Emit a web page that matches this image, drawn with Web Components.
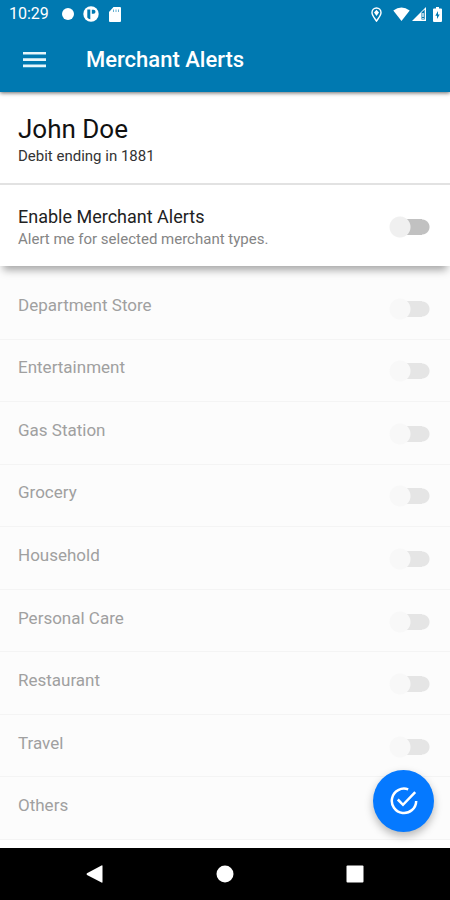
<!DOCTYPE html>
<html lang="en">
<head>
<meta charset="utf-8">
<meta name="viewport" content="width=device-width, initial-scale=1">
<title>Merchant Alerts</title>
<style>
html, body { margin: 0; background: #fff; }
body { font-family: Roboto, "Liberation Sans", sans-serif; color: #222; }
</style>
</head>
<body>
<alerts-screen></alerts-screen>

<template id="status-bar">
<style>
:host { display: flex; align-items: center; justify-content: space-between; height: 28px; padding: 0 8px 0 9px; color: #fff; font-size: 16px; line-height: 20px; }
div { display: flex; align-items: center; }
time { margin-right: 13px; }
svg { display: block; fill: currentColor; }
.dot { margin-right: 9px; }
.app { margin-right: 10px; }
.pin { margin-right: 11px; }
.signal { margin: 0 7px 0 2px; }
</style>
<div>
<time>10:29</time>
<svg class="dot" width="12" height="14" viewBox="0 0 12 14"><circle cx="6" cy="7" r="6"/></svg>
<svg class="app" width="16" height="16" viewBox="0 0 16 16"><circle cx="8" cy="8" r="7.7"/><path d="M4.300 3.500H7.300V13.300A5.500 5.500 0 0 1 4.300 11.500Z" fill="#0079b1"/><path d="M8.800 3.800H10.500A2 2 0 0 1 10.500 7.800H8.800Z" fill="#0079b1"/></svg>
<svg width="12" height="15" viewBox="0 0 12 15"><path d="M4.500 0H11Q12 0 12 1V14Q12 15 11 15H1Q0 15 0 14V5Z"/><path d="M4.500 2.500V5M7 2.500V5M9.500 2.500V5" stroke="#0079b1" stroke-opacity=".6"/></svg>
</div>
<div>
<svg class="pin" width="11" height="15" viewBox="0 0 11 15"><path d="M5.500 14C3.500 11 1 8.500 1 5.500A4.500 4.500 0 0 1 10 5.500C10 8.500 7.500 11 5.500 14Z" fill="none" stroke="currentColor" stroke-width="1.400"/><path d="M5.500 2.800L8 5.500L5.500 9L3 5.500Z"/></svg>
<svg width="17" height="14" viewBox="0 0 17 14"><path d="M8.500 14L.3 3.500Q8.500-2.700 16.700 3.500Z"/></svg>
<svg class="signal" width="14" height="14" viewBox="0 0 14 14"><path d="M0 14L14 0V14Z"/><path d="M9.500 5.500V12.500H12.700V2.500Z" fill="#0079b1"/><path d="M11 6V10M11 11V12" stroke="currentColor" stroke-width="1.300"/></svg>
<svg width="9" height="15" viewBox="0 0 9 15"><path d="M3 0H6V1.500H8Q9 1.500 9 2.500V14Q9 15 8 15H1Q0 15 0 14V2.500Q0 1.500 1 1.500H3Z"/><path d="M5 4L2.300 8.700H4V12L6.700 7.500H5Z" fill="#0079b1"/></svg>
</div>
</template>

<template id="app-bar">
<style>
:host { display: block; position: relative; z-index: 2; background: #0079b1; color: #fff; box-shadow: 0 1px 4px rgba(0,0,0,.6); }
header { display: flex; align-items: center; height: 64px; padding: 0 22px; gap: 39px; box-sizing: border-box; }
button { border: 0; padding: 0; background: none; color: inherit; display: block; }
svg { display: block; }
h1 { margin: 0; font-size: 22px; line-height: 28px; font-weight: 500; }
</style>
<status-bar></status-bar>
<header>
<button type="button" aria-label="Menu"><svg width="25" height="18" viewBox="0 0 25 18" stroke="#e6f6fb" stroke-width="2.600"><path d="M1 2.300H24M1 8.600H24M1 14.900H24"/></svg></button>
<h1><slot></slot></h1>
</header>
</template>

<template id="account-card">
<style>
:host { display: block; padding: 20px 18px 17px; border-bottom: 2px solid #e2e2e2; background: #fff; }
h2 { margin: 0; font-size: 26px; line-height: 34px; font-weight: 400; color: #111; }
p { margin: 0; font-size: 15px; line-height: 20px; color: #333; }
</style>
<h2><slot name="name"></slot></h2>
<p><slot></slot></p>
</template>

<template id="alert-toggle">
<style>
:host { display: block; box-sizing: border-box; border-bottom: 1px solid #f4f4f4; color: #a0a0a0; --track: #e5e5e5; --thumb: #f8f8f8; --size: 17px; }
:host([main]) { position: relative; z-index: 1; height: 81px; border: 0; background: #fff; color: #222; box-shadow: 0 7px 8px -3px rgba(0,0,0,.35); --track: #c1c1c1; --thumb: #f0f0f0; --size: 18px; }
label { display: flex; align-items: center; justify-content: space-between; height: 100%; padding: 0 20px 0 18px; box-sizing: border-box; }
.text { display: block; margin-bottom: 6px; font-size: var(--size); line-height: 22px; }
:host([main]) .text { margin: 4px 0 0; }
::slotted([slot=hint]) { display: block; font-size: 15px; color: #858585; }
input { appearance: none; flex: none; width: 41px; height: 22px; margin: 2px 0 0; background: radial-gradient(circle at 11px 11px, var(--thumb) 10px, transparent 11px), linear-gradient(var(--track), var(--track)) 11px 3px / 22px 16px no-repeat, radial-gradient(circle at 33px 11px, var(--track) 7px, transparent 8px); }
input:checked { transform: scaleX(-1); --track: #8bbcff; --thumb: #007aff; }
</style>
<label><span class="text"><slot></slot><slot name="hint"></slot></span><input type="checkbox" role="switch"></label>
</template>

<template id="save-button">
<style>
:host { display: block; position: absolute; right: 16px; bottom: 68px; z-index: 3; }
button { display: grid; place-items: center; width: 61px; height: 62px; padding: 0; border: 0; border-radius: 50%; background: #0579ff; box-shadow: 0 4px 8px rgba(0,0,0,.28); }
svg { display: block; }
</style>
<button type="button" aria-label="Save"><svg width="28" height="28" viewBox="0 0 28 28" fill="none" stroke="#fff" stroke-width="2.500"><path d="M18.200 2.400A12.200 12.200 0 1 0 26.200 14"/><path d="M7.800 12.500L13 17.800L25.200 5.200"/></svg></button>
</template>

<template id="system-nav">
<style>
:host { display: block; background: #000; }
nav { display: grid; grid-template-columns: repeat(3, 130px); justify-content: center; align-items: center; height: 52px; }
button { display: grid; place-items: center; height: 52px; border: 0; padding: 0; background: none; }
svg { display: block; fill: #fff; }
</style>
<nav aria-label="System">
<button type="button" aria-label="Back"><svg width="18" height="18" viewBox="0 0 18 18"><path d="M16.500 1V17Q16.500 18 15.500 17.500L1 10Q0 9 1 8.200L15.500.5Q16.500 0 16.500 1Z"/></svg></button>
<button type="button" aria-label="Home"><svg width="18" height="18" viewBox="0 0 18 18"><circle cx="9" cy="9" r="8.500"/></svg></button>
<button type="button" aria-label="Recent apps"><svg width="18" height="18" viewBox="0 0 18 18"><rect x=".5" y=".5" width="17" height="17" rx="1"/></svg></button>
</nav>
</template>

<template id="alerts-screen">
<style>
:host { display: flex; flex-direction: column; min-height: 100vh; position: relative; }
main { flex: 1; display: flex; flex-direction: column; }
.list { flex: 1; display: grid; grid-auto-rows: 1fr; padding-top: 11px; background: #fcfcfc; margin-bottom: 8px; }
</style>
<app-bar>Merchant Alerts</app-bar>
<main>
<account-card><span slot="name">John Doe</span>Debit ending in 1881</account-card>
<alert-toggle main>Enable Merchant Alerts<span slot="hint">Alert me for selected merchant types.</span></alert-toggle>
<div class="list">
<alert-toggle disabled>Department Store</alert-toggle>
<alert-toggle disabled>Entertainment</alert-toggle>
<alert-toggle disabled>Gas Station</alert-toggle>
<alert-toggle disabled>Grocery</alert-toggle>
<alert-toggle disabled>Household</alert-toggle>
<alert-toggle disabled>Personal Care</alert-toggle>
<alert-toggle disabled>Restaurant</alert-toggle>
<alert-toggle disabled>Travel</alert-toggle>
<alert-toggle disabled>Others</alert-toggle>
</div>
</main>
<save-button></save-button>
<system-nav></system-nav>
</template>

<script>
class TemplateElement extends HTMLElement {
  constructor() {
    super();
    this.attachShadow({ mode: "open" }).append(
      document.getElementById(this.localName).content.cloneNode(true));
  }
}
class StatusBar extends TemplateElement {}
class AppBar extends TemplateElement {}
class AccountCard extends TemplateElement {}
class SaveButton extends TemplateElement {}
class SystemNav extends TemplateElement {}
class AlertsScreen extends TemplateElement {}
class AlertToggle extends TemplateElement {
  static observedAttributes = ["disabled"];
  attributeChangedCallback() {
    this.shadowRoot.querySelector("input").disabled = this.hasAttribute("disabled");
  }
}
customElements.define("status-bar", StatusBar);
customElements.define("app-bar", AppBar);
customElements.define("account-card", AccountCard);
customElements.define("alert-toggle", AlertToggle);
customElements.define("save-button", SaveButton);
customElements.define("system-nav", SystemNav);
customElements.define("alerts-screen", AlertsScreen);
</script>
</body>
</html>
